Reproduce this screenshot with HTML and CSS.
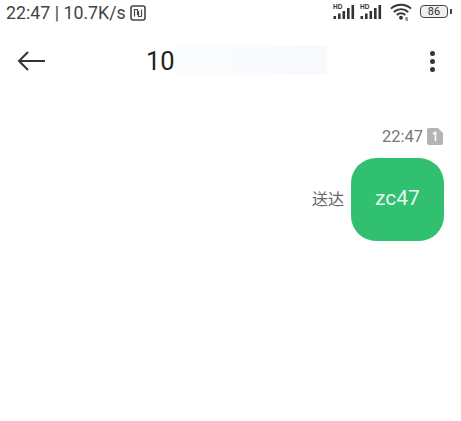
FILE: index.html
```html
<!DOCTYPE html>
<html lang="zh">
  <head>
    <meta charset="UTF-8" />
    <title>短信</title>
    <link rel="stylesheet" href="styles.css">
  </head>
  <body>
    <div class="status-bar">
      <div class="status-left">
        <span>22:47 | 10.7K/s</span>
        <svg class="nfc" width="16" height="16" viewBox="0 0 16 16">
          <rect x="1" y="1" width="14" height="14" rx="2" fill="none" stroke="#444" stroke-width="1.6"/>
          <path d="M4.5 11.5V4.5H7.5V9.5H9M11.500 11.500V4.500M11.500 11.500H8.500V6.500H7" fill="none" stroke="#444" stroke-width="1.2"/>
        </svg>
      </div>
      <div class="status-right">
        <svg width="23" height="17" viewBox="0 0 23 17">
          <text x="0" y="6" class="hd">HD</text>
          <rect x="0.500" y="13" width="2.600" height="3" fill="#333"/>
          <rect x="5" y="10.500" width="2.600" height="5.500" fill="#333"/>
          <rect x="9.500" y="8" width="2.600" height="8" fill="#333"/>
          <rect x="14" y="5" width="2.600" height="11" fill="#333"/>
          <rect x="18.500" y="2" width="2.600" height="14" fill="#333"/>
        </svg>
        <svg width="23" height="17" viewBox="0 0 23 17">
          <text x="0" y="6" class="hd">HD</text>
          <rect x="0.500" y="13" width="2.600" height="3" fill="#333"/>
          <rect x="5" y="10.500" width="2.600" height="5.500" fill="#333"/>
          <rect x="9.500" y="8" width="2.600" height="8" fill="#333"/>
          <rect x="14" y="5" width="2.600" height="11" fill="#333"/>
          <rect x="18.500" y="2" width="2.600" height="14" fill="#333"/>
        </svg>
        <svg class="wifi" width="22" height="19" viewBox="0 0 23 19">
          <path d="M1 6.500C7 1 16 1 22 6.500M4 10C8.500 6 14.500 6 19 10M7 13C9.800 11 13.200 11 16 13" fill="none" stroke="#333" stroke-width="2"/>
          <circle cx="11.500" cy="16" r="2" fill="#333"/>
          <text x="16" y="19" class="wifi-mark">6</text>
        </svg>
        <div class="battery"><span class="battery-level">86</span></div>
        <div class="battery-tip"></div>
      </div>
    </div>

    <div class="title-bar">
      <svg class="back" width="30" height="22" viewBox="0 0 30 22">
        <path d="M28 11H2M11 2L2 11L11 20" fill="none" stroke="#333" stroke-width="2"/>
      </svg>
      <div class="title">
        <span class="number">10</span>
        <div class="number-mask"></div>
      </div>
      <div class="more">
        <i></i><i></i><i></i>
      </div>
    </div>

    <div class="thread">
      <div class="msg-time">
        <span>22:47</span>
        <svg width="16" height="17" viewBox="0 0 16 17">
          <path d="M2 0H11L16 5V15A2 2 0 0 1 14 17H2A2 2 0 0 1 0 15V2A2 2 0 0 1 2 0Z" fill="#b4b4b4"/>
          <path d="M6 6L8.500 4.500V13" fill="none" stroke="#fff" stroke-width="1.600"/>
        </svg>
      </div>
      <div class="msg-row">
        <span class="msg-state">送达</span>
        <div class="bubble">zc47</div>
      </div>
    </div>
  </body>
</html>
```

FILE: styles.css
```css
* {
  box-sizing: border-box;
}
html,
body {
  margin: 0;
  height: 100%;
  overflow: hidden;
}
body {
  background: #fff;
  color: #333;
  font-family: "Noto Sans", "Noto Sans CJK SC", sans-serif;
}
.status-bar {
  height: 30px;
  padding: 0 9px 5px 6px;
  display: flex;
  align-items: center;
  justify-content: space-between;
}
.status-left {
  display: flex;
  align-items: center;
  gap: 4px;
  font-size: 17.800px;
  color: #444;
  font-family: Roboto, sans-serif;
}
.status-right {
  display: flex;
  align-items: center;
  gap: 4px;
  margin-bottom: 3px;
}
.hd {
  font: bold 6.500px "Liberation Sans", sans-serif;
  fill: #333;
}
.wifi {
  margin-left: 3px;
}
.wifi-mark {
  font: bold 5px "Liberation Sans", sans-serif;
  fill: #333;
}
.battery {
  width: 28px;
  height: 13px;
  margin-left: 4px;
  border: 1.500px solid #444;
  border-radius: 4px;
  display: flex;
  align-items: center;
  justify-content: center;
  background: #efefef;
}
.battery-level {
  font: 11px Roboto, sans-serif;
  color: #333;
}
.battery-tip {
  width: 2px;
  height: 5px;
  margin-left: -2px;
  background: #444;
}
.title-bar {
  height: 62px;
  padding: 0 26px 0 17px;
  display: flex;
  align-items: center;
  justify-content: space-between;
}
.title {
  flex: 1;
  display: flex;
  align-items: center;
  margin-left: 99px;
}
.number {
  font: 400 25.500px Roboto, sans-serif;
  color: #222;
}
.number-mask {
  width: 152px;
  height: 30px;
  margin-top: -2px;
  background: linear-gradient(90deg, #fbfcfe, #f8f9fc);
}
.more {
  display: flex;
  flex-direction: column;
  gap: 3px;
}
.more i {
  width: 5px;
  height: 5px;
  border-radius: 50%;
  background: #333;
}
.thread {
  padding: 35px 17px 0 0;
  display: flex;
  flex-direction: column;
  align-items: flex-end;
}
.msg-time {
  display: flex;
  align-items: center;
  gap: 4px;
  padding-right: 1px;
  font: 16.500px Roboto, sans-serif;
  color: #777;
}
.msg-row {
  margin-top: 12px;
  display: flex;
  align-items: center;
  gap: 7px;
}
.msg-state {
  margin-bottom: 3px;
  font-size: 16px;
  color: #666;
}
.bubble {
  width: 93px;
  height: 83px;
  padding-bottom: 4px;
  border-radius: 25px;
  background: #31c070;
  color: #e6f9ee;
  font: 21px Roboto, sans-serif;
  display: flex;
  align-items: center;
  justify-content: center;
}
```
